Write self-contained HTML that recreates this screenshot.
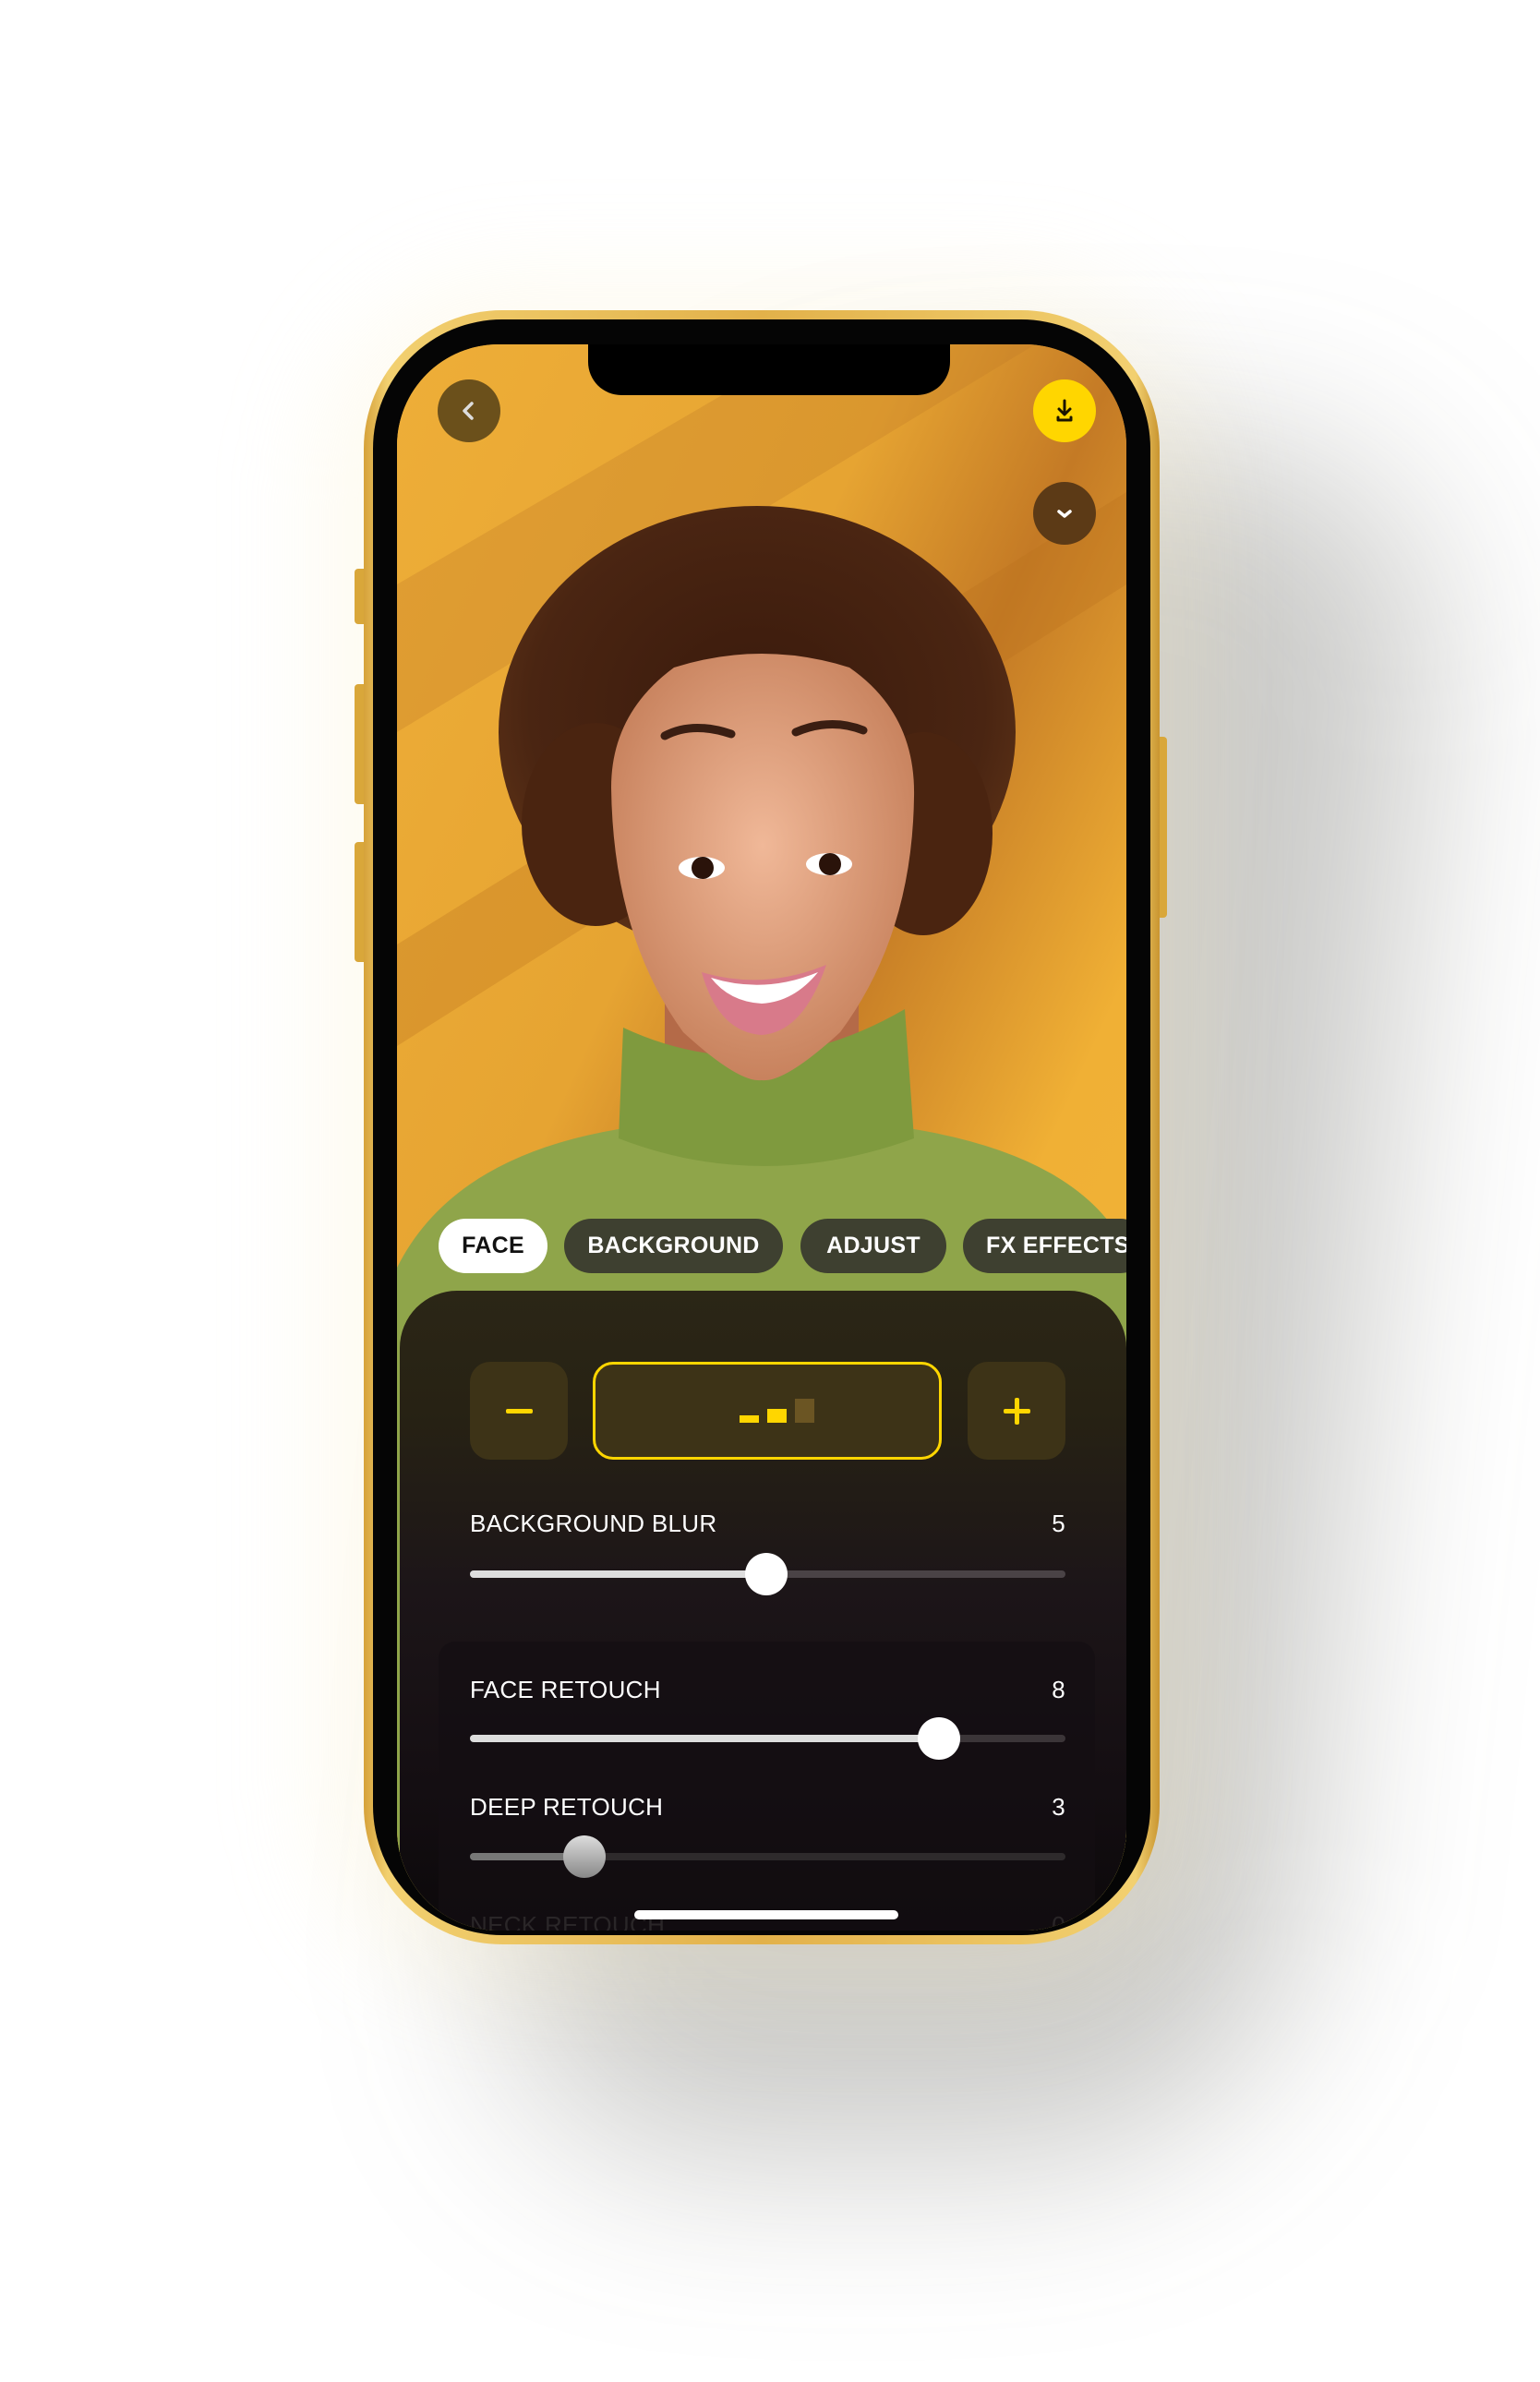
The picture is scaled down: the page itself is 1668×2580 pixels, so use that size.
<!DOCTYPE html>
<html><head><meta charset="utf-8">
<style>
*{margin:0;padding:0;box-sizing:border-box}
body{width:1668px;height:2580px;background:#fff;position:relative;overflow:hidden;font-family:"Liberation Sans",sans-serif}
.abs{position:absolute}
.shadow{left:620px;top:480px;width:860px;height:1860px;border-radius:260px;background:rgba(70,70,60,0.28);filter:blur(100px);transform:skewX(-6deg)}
.glow{left:340px;top:300px;width:970px;height:1860px;border-radius:220px;background:rgba(250,238,190,0.22);filter:blur(50px)}
.btn{background:#d9a73a;border-radius:4px}
.frame{left:394px;top:336px;width:862px;height:1770px;border-radius:150px;background:linear-gradient(90deg,#d6a23a,#f2d070 3%,#e2b14a 50%,#f2d070 97%,#c99530);}
.bezel{left:404px;top:346px;width:842px;height:1750px;border-radius:140px;background:#050505}
.screen{left:430px;top:373px;width:790px;height:1718px;border-radius:110px;overflow:hidden;background:#e8a935}
.tab{position:absolute;top:947px;height:59px;border-radius:30px;background:#3e4030;color:#fff;font-weight:bold;font-size:25px;line-height:59px;text-align:center;letter-spacing:0.3px}
.lbl{position:absolute;color:#fff;font-size:26px;letter-spacing:0.3px}
.track{position:absolute;height:8px;border-radius:4px;background:#3b3538}
</style></head><body>
<div class="abs shadow"></div>
<div class="abs glow"></div>
<div class="abs btn" style="left:384px;top:616px;width:14px;height:60px"></div>
<div class="abs btn" style="left:384px;top:741px;width:14px;height:130px"></div>
<div class="abs btn" style="left:384px;top:912px;width:14px;height:130px"></div>
<div class="abs btn" style="left:1252px;top:798px;width:12px;height:196px"></div>
<div class="abs frame"></div>
<div class="abs bezel"></div>
<div class="abs screen">
<svg width="790" height="1718" style="position:absolute;left:0;top:0">
<defs>
<linearGradient id="bg" x1="0" y1="0" x2="1" y2="1">
<stop offset="0" stop-color="#eeae38"/><stop offset="0.35" stop-color="#e6a432"/><stop offset="0.5" stop-color="#c47a25"/><stop offset="0.7" stop-color="#f0b035"/><stop offset="1" stop-color="#f2b53a"/>
</linearGradient>
<radialGradient id="hair" cx="0.5" cy="0.45" r="0.55"><stop offset="0" stop-color="#3a1a0c"/><stop offset="0.8" stop-color="#4a2512"/><stop offset="1" stop-color="#5a3016"/></radialGradient>
<radialGradient id="skin" cx="0.5" cy="0.45" r="0.6"><stop offset="0" stop-color="#f0b898"/><stop offset="1" stop-color="#c47d58"/></radialGradient>
</defs>
<rect width="790" height="1718" fill="url(#bg)"/>
<path d="M0 260 L790 -200 L790 -60 L0 420Z" fill="#c07a28" opacity="0.3"/>
<path d="M0 650 L790 160 L790 260 L0 760Z" fill="#b8701f" opacity="0.3"/>
<ellipse cx="390" cy="420" rx="280" ry="245" fill="url(#hair)"/>
<ellipse cx="215" cy="520" rx="80" ry="110" fill="#4a2410"/>
<ellipse cx="570" cy="530" rx="75" ry="110" fill="#4a2410"/>
<path d="M290 650 L290 790 L500 790 L500 650Z" fill="#b46a48"/>
<path d="M0 1000 Q60 880 240 850 L560 850 Q740 880 790 980 L790 1718 L0 1718Z" fill="#8fa54a"/>
<path d="M245 740 Q395 810 550 720 L560 860 Q395 920 240 860Z" fill="#7f9a3e"/>
<path d="M232 480 Q232 400 300 350 Q395 320 490 350 Q562 400 560 490 Q558 640 480 745 Q420 800 395 797 Q370 800 310 745 Q234 640 232 480Z" fill="url(#skin)"/>
<path d="M290 424 Q320 408 362 422" stroke="#3a1e12" stroke-width="9" fill="none" stroke-linecap="round"/>
<path d="M432 420 Q470 404 505 418" stroke="#3a1e12" stroke-width="9" fill="none" stroke-linecap="round"/>
<ellipse cx="330" cy="567" rx="25" ry="12" fill="#fff"/><circle cx="331" cy="567" r="12" fill="#2a130a"/>
<ellipse cx="468" cy="563" rx="25" ry="12" fill="#fff"/><circle cx="469" cy="563" r="12" fill="#2a130a"/>
<path d="M330 680 Q398 700 465 672 Q440 745 395 748 Q348 745 330 680Z" fill="#d87a8a"/>
<path d="M340 686 Q398 704 456 680 Q430 712 395 714 Q360 712 340 686Z" fill="#fff"/>
</svg>
<div class="abs" style="left:44px;top:38px;width:68px;height:68px;border-radius:50%;background:#6b501b"></div>
<svg class="abs" style="left:60px;top:54px" width="36" height="36"><path d="M21 10 L13 18 L21 26" stroke="#ddd" stroke-width="3.5" fill="none" stroke-linecap="round" stroke-linejoin="round"/></svg>
<div class="abs" style="left:689px;top:38px;width:68px;height:68px;border-radius:50%;background:#ffd600"></div>
<svg class="abs" style="left:705px;top:54px" width="36" height="36"><path d="M18 7 V22 M12 16 L18 22 L24 16 M11 25 V28 H25 V25" stroke="#1a1400" stroke-width="3" fill="none" stroke-linecap="round" stroke-linejoin="round"/></svg>
<div class="abs" style="left:689px;top:149px;width:68px;height:68px;border-radius:50%;background:#5c3a16"></div>
<svg class="abs" style="left:705px;top:165px" width="36" height="36"><path d="M12 16 L18 21 L24 16" stroke="#fff" stroke-width="3.5" fill="none" stroke-linecap="round" stroke-linejoin="round"/></svg>
<div class="abs" style="left:207px;top:-20px;width:392px;height:75px;border-radius:0 0 36px 36px;background:#000"></div>
<div class="tab" style="left:45px;width:118px;background:#fff;color:#111">FACE</div>
<div class="tab" style="left:181px;width:237px">BACKGROUND</div>
<div class="tab" style="left:437px;width:158px">ADJUST</div>
<div class="tab" style="left:613px;width:200px;text-align:left;padding-left:25px">FX EFFECTS</div>
<div class="abs" style="left:3px;top:1025px;width:787px;height:720px;border-radius:62px 62px 0 0;background:linear-gradient(180deg,#2b2616 0%,#272214 18%,#1c1518 45%,#140e12 75%,#0a0809 100%)"></div>
<div class="abs" style="left:79px;top:1102px;width:106px;height:106px;border-radius:22px;background:#3d3317"></div>
<div class="abs" style="left:118px;top:1153px;width:29px;height:5px;border-radius:2px;background:#ffd600"></div>
<div class="abs" style="left:212px;top:1102px;width:378px;height:106px;border-radius:22px;background:#3d3317;border:3px solid #ffd600"></div>
<div class="abs" style="left:371px;top:1160px;width:21px;height:8px;background:#ffd600"></div>
<div class="abs" style="left:401px;top:1153px;width:21px;height:15px;background:#ffd600"></div>
<div class="abs" style="left:431px;top:1142px;width:21px;height:26px;background:#6b5523"></div>
<div class="abs" style="left:618px;top:1102px;width:106px;height:106px;border-radius:22px;background:#3d3317"></div>
<div class="abs" style="left:657px;top:1153px;width:29px;height:5px;border-radius:2px;background:#ffd600"></div>
<div class="abs" style="left:669px;top:1141px;width:5px;height:29px;border-radius:2px;background:#ffd600"></div>
<div class="lbl" style="left:79px;top:1262px">BACKGROUND BLUR</div>
<div class="lbl" style="left:700px;top:1262px;width:24px;text-align:right">5</div>
<div class="track" style="left:79px;top:1328px;width:645px;background:#4a4346"></div>
<div class="track" style="left:79px;top:1328px;width:320px;background:#ddd"></div>
<div class="abs" style="left:377px;top:1309px;width:46px;height:46px;border-radius:50%;background:#fff"></div>
<div class="abs" style="left:45px;top:1405px;width:711px;height:340px;border-radius:18px;background:rgba(20,14,18,0.7)"></div>
<div class="lbl" style="left:79px;top:1442px">FACE RETOUCH</div>
<div class="lbl" style="left:700px;top:1442px;width:24px;text-align:right">8</div>
<div class="track" style="left:79px;top:1506px;width:645px"></div>
<div class="track" style="left:79px;top:1506px;width:510px;background:#ddd"></div>
<div class="abs" style="left:564px;top:1487px;width:46px;height:46px;border-radius:50%;background:#fff"></div>
<div class="lbl" style="left:79px;top:1569px">DEEP RETOUCH</div>
<div class="lbl" style="left:700px;top:1569px;width:24px;text-align:right">3</div>
<div class="track" style="left:79px;top:1634px;width:645px;background:#2e2a2c"></div>
<div class="track" style="left:79px;top:1634px;width:120px;background:#777"></div>
<div class="abs" style="left:180px;top:1615px;width:46px;height:46px;border-radius:50%;background:linear-gradient(180deg,#ddd,#888)"></div>
<div class="lbl" style="left:79px;top:1697px;color:#2a2628">NECK RETOUCH</div>
<div class="lbl" style="left:700px;top:1697px;width:24px;text-align:right;color:#2a2628">0</div>
<div class="abs" style="left:257px;top:1696px;width:286px;height:10px;border-radius:5px;background:#fff"></div>
</div>
</body></html>
